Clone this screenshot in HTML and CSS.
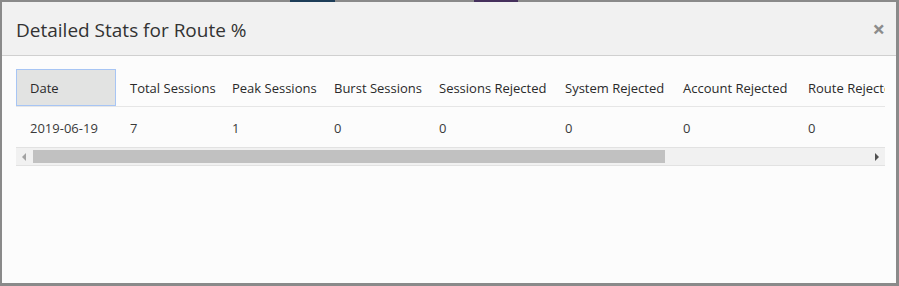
FILE: index.html
```html
<!DOCTYPE html>
<html>
<head>
<meta charset="utf-8">
<link rel="stylesheet" href="styles.css">
</head>
<body>
<div class="backdrop-strip">
  <span class="seg seg-gap1"></span>
  <span class="seg seg-blue"></span>
  <span class="seg seg-gap2"></span>
  <span class="seg seg-purple"></span>
</div>
<div class="modal">
  <div class="modal-header">
    <h4 class="modal-title">Detailed Stats for Route %</h4>
    <span class="close">&times;</span>
  </div>
  <div class="modal-body">
    <div class="table-scroll">
      <table class="stats">
        <colgroup>
          <col class="c-date"><col class="c-total"><col class="c-peak"><col class="c-burst"><col class="c-srej"><col class="c-sys"><col class="c-acc"><col class="c-route">
        </colgroup>
        <thead>
          <tr>
            <th class="sorted">Date</th>
            <th>Total Sessions</th>
            <th>Peak Sessions</th>
            <th>Burst Sessions</th>
            <th>Sessions Rejected</th>
            <th>System Rejected</th>
            <th>Account Rejected</th>
            <th>Route Rejected</th>
          </tr>
        </thead>
        <tbody>
          <tr>
            <td>2019-06-19</td>
            <td>7</td>
            <td>1</td>
            <td>0</td>
            <td>0</td>
            <td>0</td>
            <td>0</td>
            <td>0</td>
          </tr>
        </tbody>
      </table>
    </div>
    <div class="hscroll">
      <span class="arrow arrow-left"></span>
      <div class="track"><div class="thumb"></div></div>
      <span class="arrow arrow-right"></span>
    </div>
  </div>
</div>
</body>
</html>
```

FILE: styles.css
```css
html, body {
  margin: 0;
  padding: 0;
}
body {
  background: #8a8a8a;
  width: 899px;
  height: 286px;
  overflow: hidden;
  font-family: "Open Sans", "Noto Sans", sans-serif;
}
.backdrop-strip {
  display: flex;
  height: 2px;
}
.seg { display: block; height: 2px; }
.seg-gap1 { width: 290px; }
.seg-blue { width: 45px; background: #1d3d58; }
.seg-gap2 { width: 139px; }
.seg-purple { width: 44px; background: #45305c; }

.modal {
  margin-left: 2px;
  width: 894px;
  height: 281px;
  background: #fcfcfc;
  display: flex;
  flex-direction: column;
}
.modal-header {
  height: 53px;
  background: #f1f1f1;
  border-bottom: 1px solid #d0d0d0;
  display: flex;
  align-items: center;
  justify-content: space-between;
  padding: 0 11px 0 14px;
  flex-shrink: 0;
}
.modal-title {
  margin: 0 0 0 0;
  padding-top: 2px;
  font-size: 19px;
  font-weight: 400;
  color: #333;
}
.close {
  font-size: 22px;
  font-weight: 700;
  color: #8c8c8c;
  line-height: 1;
  margin-top: -2px;
}
.modal-body {
  padding: 13px 11px 0 14px;
}
.table-scroll {
  width: 869px;
  overflow: hidden;
}
.stats {
  border-collapse: collapse;
  table-layout: fixed;
  width: 904px;
  font-size: 13px;
  color: #333;
}
.c-date { width: 100px; }
.c-total { width: 102px; }
.c-peak { width: 102px; }
.c-burst { width: 105px; }
.c-srej { width: 126px; }
.c-sys { width: 118px; }
.c-acc { width: 125px; }
.c-route { width: 126px; }
.stats th, .stats td {
  text-align: left;
  white-space: nowrap;
  overflow: hidden;
  padding: 0 0 0 14px;
}
.stats th {
  height: 37px;
  font-weight: 400;
  color: #2a2a2a;
  border-bottom: 1px solid #e6e6e6;
}
.stats th.sorted {
  background: #e2e3e2;
  box-shadow: inset 0 0 0 1px #a7c5f4;
}
.stats td {
  height: 39px;
  padding-top: 1px;
  color: #3a3a3a;
}
.hscroll {
  width: 869px;
  height: 17px;
  border-top: 1px solid #e2e2e2;
  border-bottom: 1px solid #e2e2e2;
  background: #f1f1f1;
  display: flex;
  align-items: center;
}
.arrow {
  width: 0;
  height: 0;
  border-top: 4px solid transparent;
  border-bottom: 4px solid transparent;
}
.arrow-left {
  border-right: 4px solid #a3a3a3;
  margin: 0 7px 0 6px;
}
.arrow-right {
  border-left: 4px solid #505050;
  margin: 0 6px 0 3px;
}
.track {
  flex: 1;
  height: 13px;
  display: flex;
  align-items: center;
}
.thumb {
  width: 632px;
  height: 13px;
  background: #c1c1c1;
}
```
